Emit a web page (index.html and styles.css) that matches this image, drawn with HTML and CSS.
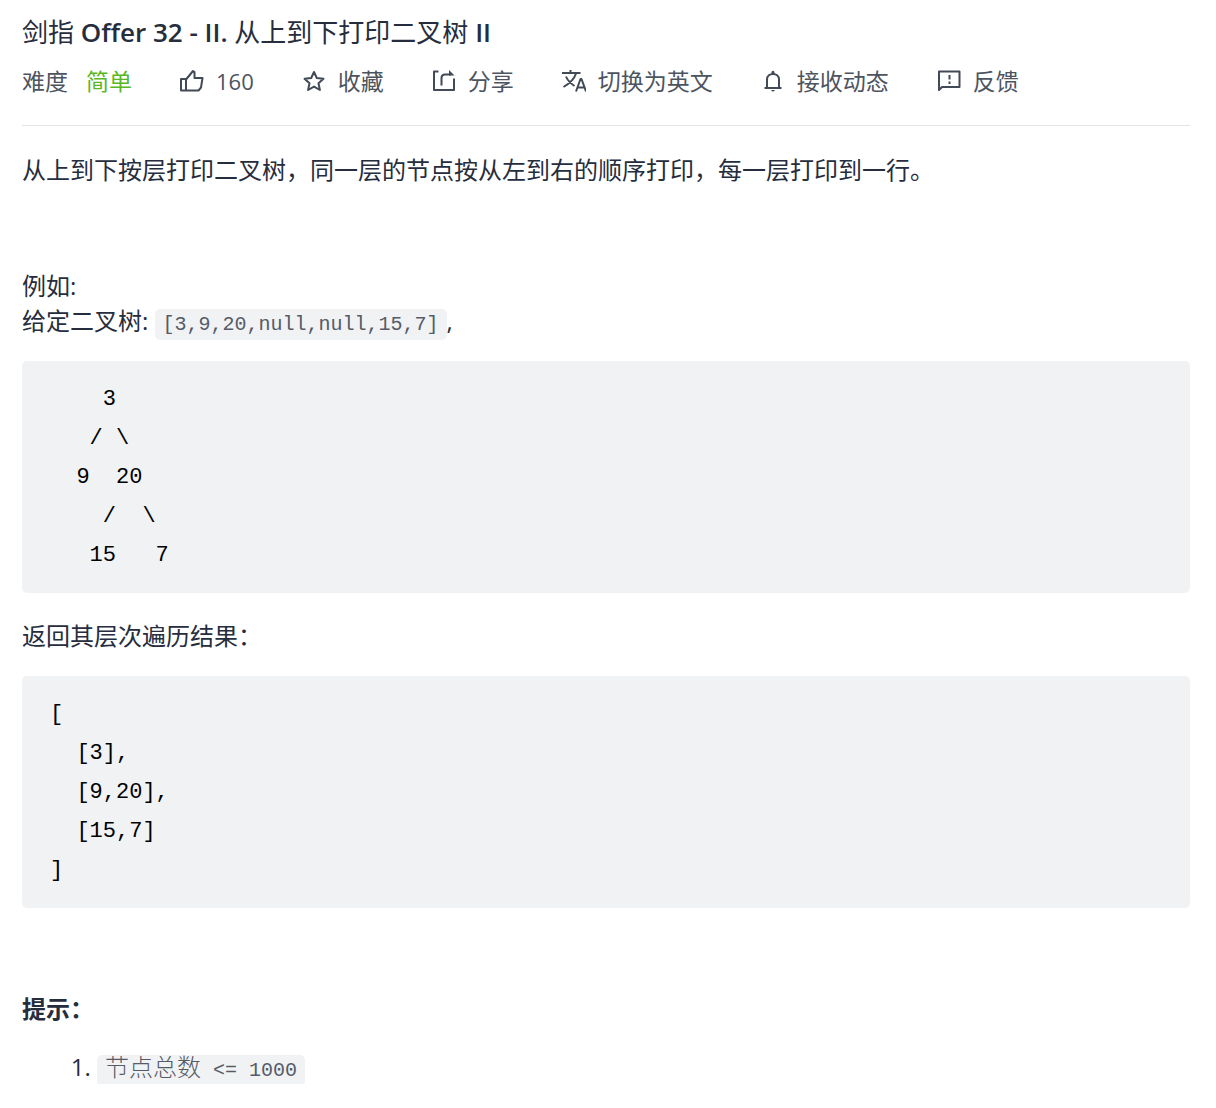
FILE: index.html
```
<!DOCTYPE html>
<html lang="zh-CN">
<head>
  <meta charset="UTF-8" />
  <meta name="viewport" content="width=device-width, initial-scale=1.0"/>
  <title>剑指 Offer 32 - II. 从上到下打印二叉树 II</title>
  <link rel="stylesheet" href="styles.css">
</head>
<body>

  <main class="question">
    <!-- Title and actions -->
    <header class="question-header">
      <h1 class="title">剑指 <span class="latin">Offer 32 - II.</span> 从上到下打印二叉树 <span class="latin">II</span></h1>
      <div class="toolbar">
        <div class="difficulty">
          <span>难度</span>
          <span class="easy">简单</span>
        </div>
        <button class="action" type="button">
          <svg class="icon" viewBox="0 0 24 24"><path d="M1 10h5v11.500H1zM6 10.500l7-8.500 1.500 1v6H22.500l-1.500 9.500-2.500 3H6"/></svg>
          <span class="count">160</span>
        </button>
        <button class="action" type="button">
          <svg class="icon" viewBox="0 0 24 24"><path d="M12 3l2.800 6 6.700.8-5 4.500 1.400 6.700-5.900-3.400L6.100 21l1.400-6.700-5-4.500 6.700-.8z"/></svg>
          <span>收藏</span>
        </button>
        <button class="action" type="button">
          <svg class="icon" viewBox="0 0 24 24"><path d="M6.500 2.500H2V21h20V9.500M9.500 16.500V9q0-3.500 3.500-3.500h6"/><path class="solid" d="M17 1l5.500 5.500H17z"/></svg>
          <span>分享</span>
        </button>
        <button class="action" type="button">
          <svg class="icon" viewBox="0 0 24 24"><path d="M0 4h18.500M8.500 1v3M4 7.500c2 5 5.500 7.500 8.500 9.500M14 4.500C12 11 6.500 15 1.500 18M14 22.500l4.500-12.500h1L24 22.500M15.500 18.500h7"/></svg>
          <span>切换为英文</span>
        </button>
        <button class="action" type="button">
          <svg class="icon" viewBox="0 0 24 24"><path d="M3.500 19h17M6 19v-8.500C6 3 18 3 18 10.500V19"/><path class="solid" d="M10.500 5V3q1.500-2.500 3 0v2zM10 21h4q-2 3-4 0z"/></svg>
          <span>接收动态</span>
        </button>
        <button class="action" type="button">
          <svg class="icon" viewBox="0 0 24 24"><path d="M2 21V2.500h20.500v15.500H5zM12.500 6v4.500M12.500 12.500v2.500"/></svg>
          <span>反馈</span>
        </button>
      </div>
    </header>

    <!-- Description -->
    <section class="content">
      <p>从上到下按层打印二叉树，同一层的节点按从左到右的顺序打印，每一层打印到一行。</p>
      <p>&nbsp;</p>
      <p>例如:<br>给定二叉树: <code>[3,9,20,null,null,15,7]</code>,</p>
<pre>
    3
   / \
  9  20
    /  \
   15   7
</pre>
      <p>返回其层次遍历结果：</p>
<pre>
[
  [3],
  [9,20],
  [15,7]
]
</pre>
      <p>&nbsp;</p>
      <p><strong>提示：</strong></p>
      <ol>
        <li><code><span class="zh">节点总数</span> &lt;= 1000</code></li>
      </ol>
    </section>
  </main>

</body>
</html>
```
FILE: styles.css
```
body {
  margin: 0;
  background: #fff;
  color: #262d3d;
  font-family: "Open Sans", "Noto Sans CJK SC", sans-serif;
  font-size: 24px;
  line-height: 35px;
}

.question {
  padding: 14px 26px 0 22px;
}

.question-header {
  border-bottom: 1px solid #e3e5e7;
  padding-bottom: 26px;
}

.title {
  margin: 0 0 14px;
  font-size: 26px;
  font-weight: 400;
  line-height: 36px;
}

.latin {
  font-weight: 600;
}

.toolbar {
  display: flex;
  flex-wrap: wrap;
  align-items: center;
  gap: 0 48px;
  color: #4c5460;
  font-size: 23px;
}

.difficulty {
  display: flex;
  gap: 18px;
}

.easy {
  color: #5ab726;
}

.action {
  display: flex;
  align-items: center;
  gap: 12px;
  padding: 0;
  border: none;
  background: none;
  color: inherit;
  font: inherit;
  cursor: pointer;
}

.count {
  font-size: 22px;
}

.icon {
  width: 24px;
  height: 24px;
  margin-bottom: 2px;
  fill: none;
  stroke: #424a57;
  stroke-width: 2;
  stroke-linejoin: round;
}

.icon .solid {
  fill: #424a57;
  stroke: none;
}

.content {
  padding-top: 26px;
}

.content p {
  margin: 0 0 23px;
}

code {
  padding: 4px 8px;
  border-radius: 5px;
  background: #f1f2f4;
  color: #555c68;
  font-family: "Liberation Mono", "Noto Sans CJK SC", monospace;
  font-size: 20px;
  line-height: 20px;
}

.zh {
  font-size: 24px;
  font-weight: 300;
}

pre {
  margin: 0 0 25px;
  padding: 19px 28px 18px;
  border-radius: 5px;
  background: #f1f2f4;
  color: #000;
  font-family: "Liberation Mono", monospace;
  font-size: 22px;
  line-height: 39px;
  overflow-x: auto;
}

ol {
  margin: 0;
  padding-left: 75px;
}
```
